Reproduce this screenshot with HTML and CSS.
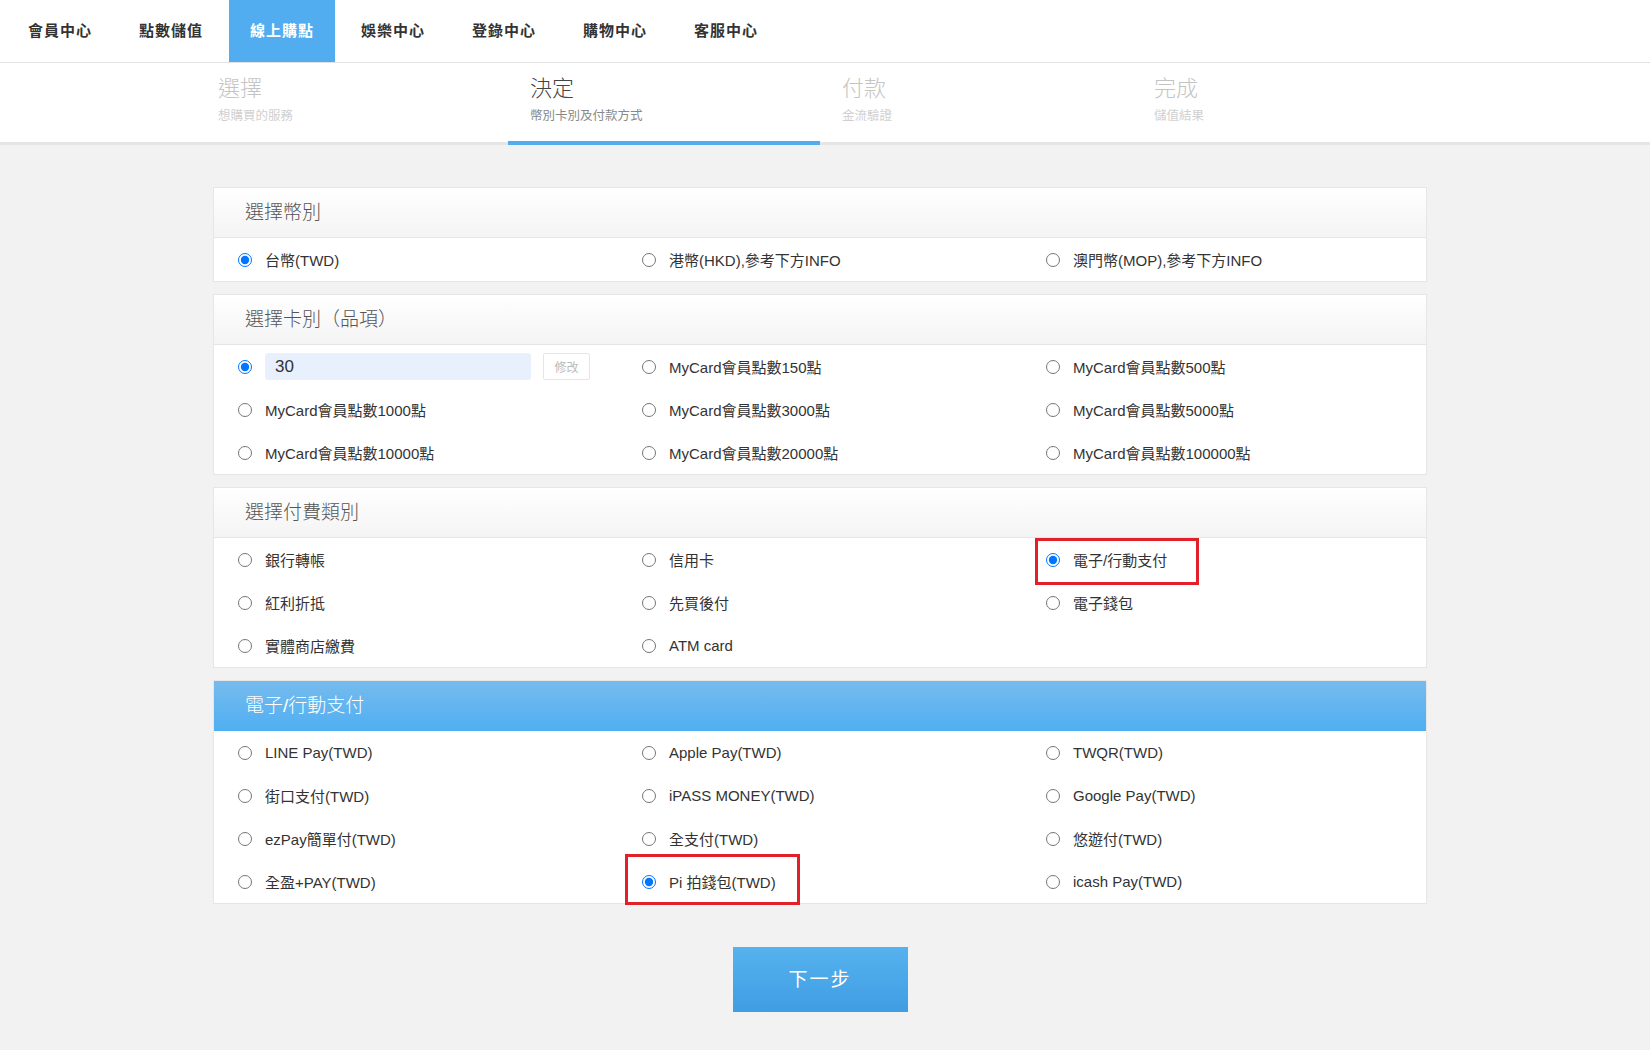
FILE: index.html
```html
<!DOCTYPE html>
<html lang="zh-Hant">
<head>
    <meta charset="UTF-8">
    <title>線上購點</title>
    <link rel="stylesheet" href="styles.css">
</head>
<body>
<div class="topnav">
    <ul class="menu">
        <li>會員中心</li>
        <li>點數儲值</li>
        <li class="on">線上購點</li>
        <li>娛樂中心</li>
        <li>登錄中心</li>
        <li>購物中心</li>
        <li>客服中心</li>
    </ul>
</div>

<div class="steps">
    <ul class="container step-list">
        <li><b>選擇</b><span>想購買的服務</span></li>
        <li class="on"><b>決定</b><span>幣別卡別及付款方式</span></li>
        <li><b>付款</b><span>金流驗證</span></li>
        <li><b>完成</b><span>儲值結果</span></li>
    </ul>
</div>

<div class="main">
    <div class="box">
        <div class="box-head">選擇幣別</div>
        <div class="opts">
            <label class="opt"><input type="radio" name="cur" checked>台幣(TWD)</label>
            <label class="opt"><input type="radio" name="cur">港幣(HKD),參考下方INFO</label>
            <label class="opt"><input type="radio" name="cur">澳門幣(MOP),參考下方INFO</label>
        </div>
    </div>

    <div class="box">
        <div class="box-head">選擇卡別（品項）</div>
        <div class="opts">
            <label class="opt"><input type="radio" name="card" checked><input type="text" class="amount" value="30"><button class="btn-edit">修改</button></label>
            <label class="opt"><input type="radio" name="card">MyCard會員點數150點</label>
            <label class="opt"><input type="radio" name="card">MyCard會員點數500點</label>
            <label class="opt"><input type="radio" name="card">MyCard會員點數1000點</label>
            <label class="opt"><input type="radio" name="card">MyCard會員點數3000點</label>
            <label class="opt"><input type="radio" name="card">MyCard會員點數5000點</label>
            <label class="opt"><input type="radio" name="card">MyCard會員點數10000點</label>
            <label class="opt"><input type="radio" name="card">MyCard會員點數20000點</label>
            <label class="opt"><input type="radio" name="card">MyCard會員點數100000點</label>
        </div>
    </div>

    <div class="box">
        <div class="box-head">選擇付費類別</div>
        <div class="opts">
            <label class="opt"><input type="radio" name="type">銀行轉帳</label>
            <label class="opt"><input type="radio" name="type">信用卡</label>
            <label class="opt mark mark1"><input type="radio" name="type" checked>電子/行動支付</label>
            <label class="opt"><input type="radio" name="type">紅利折抵</label>
            <label class="opt"><input type="radio" name="type">先買後付</label>
            <label class="opt"><input type="radio" name="type">電子錢包</label>
            <label class="opt"><input type="radio" name="type">實體商店繳費</label>
            <label class="opt"><input type="radio" name="type">ATM card</label>
        </div>
    </div>

    <div class="box">
        <div class="box-head blue">電子/行動支付</div>
        <div class="opts">
            <label class="opt"><input type="radio" name="pay">LINE Pay(TWD)</label>
            <label class="opt"><input type="radio" name="pay">Apple Pay(TWD)</label>
            <label class="opt"><input type="radio" name="pay">TWQR(TWD)</label>
            <label class="opt"><input type="radio" name="pay">街口支付(TWD)</label>
            <label class="opt"><input type="radio" name="pay">iPASS MONEY(TWD)</label>
            <label class="opt"><input type="radio" name="pay">Google Pay(TWD)</label>
            <label class="opt"><input type="radio" name="pay">ezPay簡單付(TWD)</label>
            <label class="opt"><input type="radio" name="pay">全支付(TWD)</label>
            <label class="opt"><input type="radio" name="pay">悠遊付(TWD)</label>
            <label class="opt"><input type="radio" name="pay">全盈+PAY(TWD)</label>
            <label class="opt mark mark2"><input type="radio" name="pay" checked>Pi 拍錢包(TWD)</label>
            <label class="opt"><input type="radio" name="pay">icash Pay(TWD)</label>
        </div>
    </div>

    <button class="btn-next">下一步</button>
</div>

</body>
</html>
```

FILE: styles.css
```css
body{margin:0;background:#f2f2f2;font-family:"Liberation Sans","Noto Sans CJK TC",sans-serif;color:#333;}
ul{list-style:none;margin:0;padding:0;}
.container{width:1248px;margin:0 auto;}

/* top menu */
.topnav{background:#fff;border-bottom:1px solid #e2e2e2;}
.menu{display:flex;gap:5px;padding-left:7px;}
.menu li{padding:0 21px;height:62px;line-height:62px;font-size:15px;letter-spacing:1px;font-weight:bold;color:#333;}
.menu li.on{background:#52adf0;color:#fff;}

/* steps */
.steps{background:#fff;border-bottom:3px solid #e5e5e5;padding-right:10px;}
.step-list{display:flex;margin-bottom:-3px;}
.step-list li{width:312px;padding:13px 0 17px 22px;box-sizing:border-box;border-bottom:4px solid transparent;}
.step-list b{display:block;font-size:22px;line-height:25px;font-weight:300;color:#c4c4c4;}
.step-list span{display:block;margin-top:7px;font-size:12.5px;line-height:16px;color:#d0d0d0;}
.step-list li.on{border-bottom-color:#52adf0;}
.step-list li.on b{color:#444;}
.step-list li.on span{color:#888;}

/* panels */
.main{padding:42px 10px 40px 0;}
.box{width:1214px;margin:0 auto 12px;background:#fff;border:1px solid #e6e6e6;box-sizing:border-box;}
.box-head{height:49px;line-height:49px;padding-left:31px;font-size:19px;font-weight:300;color:#555;background:linear-gradient(#fff,#f4f4f4);border-bottom:1px solid #e6e6e6;}
.box-head.blue{background:linear-gradient(#76bbed,#50aff2);color:#fff;border-bottom-color:#50aff2;}
.opts{display:grid;grid-template-columns:repeat(3,1fr);grid-auto-rows:43px;}
.opt{display:flex;align-items:center;padding-left:24px;font-size:15px;color:#333;position:relative;}
.opt input[type=radio]{width:14px;height:14px;margin:0 13px 0 0;}
.amount{width:266px;height:27px;box-sizing:border-box;border:0;border-radius:3px;background:#e8f0fe;padding:0 10px;font-size:17px;color:#333;font-family:inherit;}
.btn-edit{margin-left:12px;width:47px;height:27px;background:#fff;border:1px solid #e6e6e6;border-radius:2px;color:#bbb;font-size:12px;padding:0;font-family:inherit;}

/* red annotation frames */
.mark::after{content:"";position:absolute;border:3px solid #e3202a;box-sizing:border-box;}
.mark1::after{left:13px;top:0;width:164px;height:47px;}
.mark2::after{left:7px;top:-6px;width:175px;height:51px;}

.btn-next{display:block;margin:43px auto 0;width:175px;height:65px;border:0;padding:0 0 5px;background:linear-gradient(#56b2ee,#3f9de3);color:#fff;font-size:19px;letter-spacing:2px;font-family:inherit;}
```
